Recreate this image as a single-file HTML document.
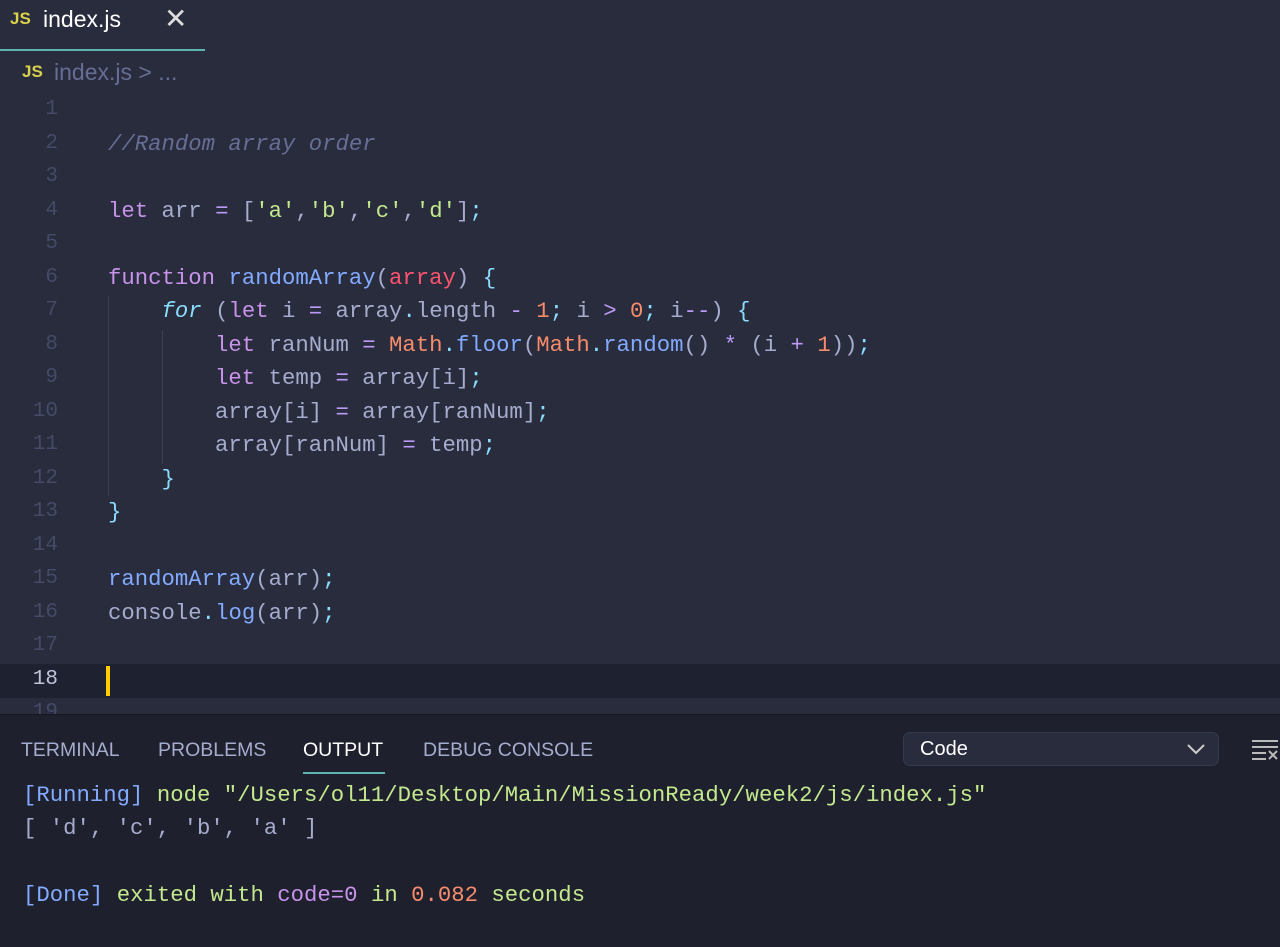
<!DOCTYPE html>
<html><head><meta charset="utf-8"><style>
body{margin:0;width:1280px;height:946px;background:#292c3c;overflow:hidden;font-family:"Liberation Sans",sans-serif;position:relative}
.abs{position:absolute}
.mono{font-family:"Liberation Mono",monospace;font-size:22.3px;white-space:pre}
.ln{position:absolute;left:0;width:58px;text-align:right;color:#454a66;font-family:"Liberation Mono",monospace;font-size:21px}
.cl{position:absolute;left:108px;color:#a6accd}
.c{color:#676e95;font-style:italic}.k{color:#c792ea}.s{color:#c3e88d}.f{color:#82aaff}.p{color:#ff5370}.n{color:#f78c6c}.o{color:#bb9af7}.y{color:#89ddff}.it{color:#89ddff;font-style:italic}
.out{position:absolute;left:23px;font-family:"Liberation Mono",monospace;font-size:22.3px;white-space:pre;color:#a6accd}
</style></head><body>
<div class="abs" style="left:0;top:49px;width:205px;height:2px;background:#5fb3b3"></div>
<div class="abs" style="left:10px;top:9px;color:#d9d24a;font-weight:bold;font-size:17px">JS</div>
<div class="abs" style="left:43px;top:6px;color:#fff;font-size:23px">index.js</div>
<div class="abs" style="left:164px;top:2px;color:#ddd;font-size:28px">✕</div>
<div class="abs" style="left:22px;top:62px;color:#d9d24a;font-weight:bold;font-size:17px">JS</div>
<div class="abs" style="left:54px;top:59px;color:#676e95;font-size:23px">index.js &gt; ...</div>
<div class="abs" style="left:0;top:664px;width:1280px;height:34px;background:#1e2130"></div>
<div class="abs" style="left:106px;top:666px;width:4px;height:30px;background:#ffcc00"></div>
<div class="abs" style="left:108px;top:296px;width:1px;height:200px;background:#3b3f54"></div>
<div class="abs" style="left:162px;top:330px;width:1px;height:134px;background:#3b3f54"></div>
<div id="code"></div>
<div class="abs" style="left:0;top:714px;width:1280px;height:232px;background:#1e202d;border-top:1px solid #15161f"></div>
<div class="abs" style="left:21px;top:739px;font-size:19.5px;color:#a6accd">TERMINAL</div>
<div class="abs" style="left:158px;top:739px;font-size:19.5px;color:#a6accd">PROBLEMS</div>
<div class="abs" style="left:303px;top:739px;font-size:19.5px;color:#fff">OUTPUT</div>
<div class="abs" style="left:303px;top:772px;width:82px;height:2px;background:#5fb3b3"></div>
<div class="abs" style="left:423px;top:739px;font-size:19.5px;color:#a6accd">DEBUG CONSOLE</div>
<div class="abs" style="left:903px;top:732px;width:316px;height:34px;background:#292c3c;border:1px solid #363a4f;border-radius:7px;box-sizing:border-box"></div>
<div class="abs" style="left:920px;top:738px;font-size:20px;color:#fff">Code</div>
<svg class="abs" style="left:1186px;top:742px" width="20" height="14"><path d="M2 3 L10 11 L18 3" stroke="#ccc" stroke-width="2" fill="none"/></svg>
<svg class="abs" style="left:1250px;top:738px" width="30" height="24"><path d="M2 3H28M2 9H28M2 15H16M2 21H16M19 13L27 21M27 13L19 21" stroke="#bbb" stroke-width="2" fill="none"/></svg>
<div class="out" style="top:782px"><span class="f">[Running]</span> <span class="s">node "/Users/ol11/Desktop/Main/MissionReady/week2/js/index.js"</span></div>
<div class="out" style="top:815px">[ 'd', 'c', 'b', 'a' ]</div>
<div class="out" style="top:882px"><span class="f">[Done]</span> <span class="s">exited with</span> <span class="k">code=0</span> <span class="s">in</span> <span class="n">0.082</span> <span class="s">seconds</span></div>
<script>
var L=["","<span class=c>//Random array order</span>","","<span class=k>let</span> arr <span class=o>=</span> [<span class=s>'a'</span>,<span class=s>'b'</span>,<span class=s>'c'</span>,<span class=s>'d'</span>]<span class=y>;</span>","",
"<span class=k>function</span> <span class=f>randomArray</span>(<span class=p>array</span>) <span class=y>{</span>",
"    <span class=it>for</span> (<span class=k>let</span> i <span class=o>=</span> array<span class=y>.</span>length <span class=o>-</span> <span class=n>1</span><span class=y>;</span> i <span class=o>&gt;</span> <span class=n>0</span><span class=y>;</span> i<span class=o>--</span>) <span class=y>{</span>",
"        <span class=k>let</span> ranNum <span class=o>=</span> <span class=n>Math</span><span class=y>.</span><span class=f>floor</span>(<span class=n>Math</span><span class=y>.</span><span class=f>random</span>() <span class=o>*</span> (i <span class=o>+</span> <span class=n>1</span>))<span class=y>;</span>",
"        <span class=k>let</span> temp <span class=o>=</span> array[i]<span class=y>;</span>",
"        array[i] <span class=o>=</span> array[ranNum]<span class=y>;</span>",
"        array[ranNum] <span class=o>=</span> temp<span class=y>;</span>",
"    <span class=y>}</span>","<span class=y>}</span>","",
"<span class=f>randomArray</span>(arr)<span class=y>;</span>","console<span class=y>.</span><span class=f>log</span>(arr)<span class=y>;</span>","","",""];
var h="";for(var i=0;i<19;i++){var t=98+i*33.5;h+='<div class="ln" style="top:'+t+'px;'+(i==17?'color:#c0c4d8':'')+'">'+(i+1)+'</div><div class="cl mono" style="top:'+(t-1)+'px">'+L[i]+'</div>';}
document.getElementById('code').innerHTML=h;
</script>
</body></html>
